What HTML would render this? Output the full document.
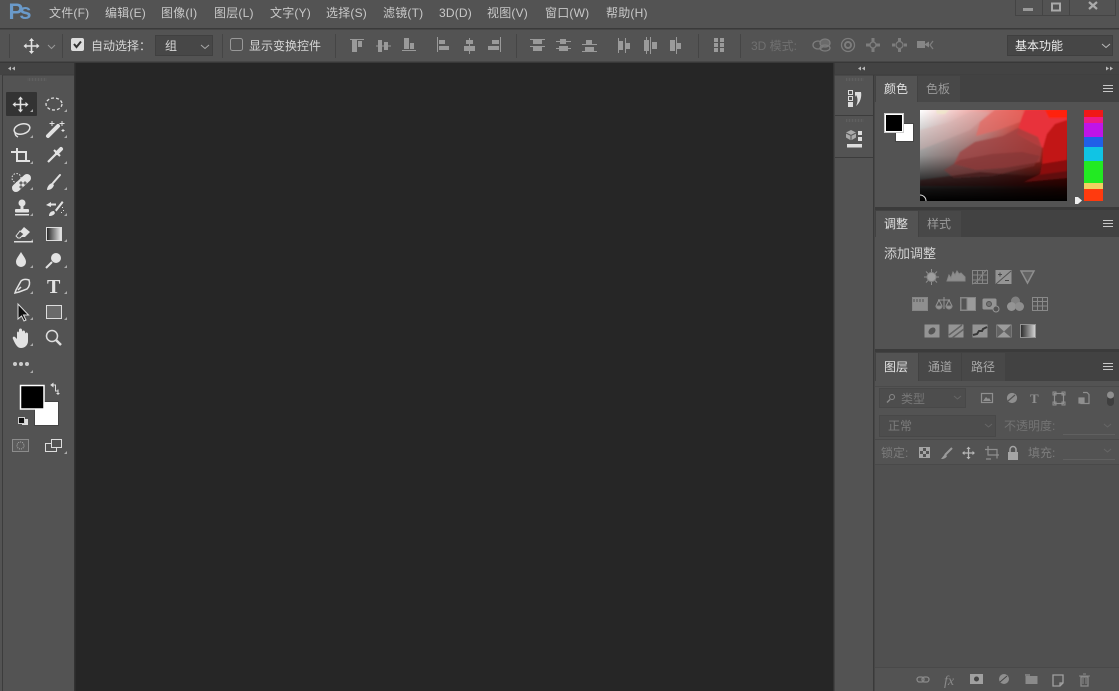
<!DOCTYPE html>
<html><head><meta charset="utf-8"><style>
html,body{margin:0;padding:0;background:#535353;overflow:hidden}
svg{display:block;font-family:"Liberation Sans","Noto Sans CJK SC",sans-serif;font-size:12px}
</style></head><body>
<svg width="1119" height="691" viewBox="0 0 1119 691" xmlns="http://www.w3.org/2000/svg">
<defs>
<linearGradient id="h" x1="0" x2="1" y1="0" y2="0"><stop offset="0" stop-color="#fff"/><stop offset=".45" stop-color="#eb9a96"/><stop offset=".72" stop-color="#ee4a40"/><stop offset="1" stop-color="#ff1a0a"/></linearGradient>
<linearGradient id="v" x1="0" x2="0" y1="0" y2="1"><stop offset="0" stop-color="#000" stop-opacity="0"/><stop offset=".5" stop-color="#000" stop-opacity=".42"/><stop offset=".75" stop-color="#000" stop-opacity=".78"/><stop offset=".87" stop-color="#000" stop-opacity=".93"/><stop offset="1" stop-color="#000"/></linearGradient>
<linearGradient id="gr" x1="0" x2="1" y1="0" y2="0"><stop offset="0" stop-color="#222"/><stop offset="1" stop-color="#eee"/></linearGradient>
<filter id="sb" x="-10%" y="-10%" width="120%" height="120%"><feGaussianBlur stdDeviation=".7"/></filter>
<clipPath id="pc"><rect x="920" y="110" width="147" height="91"/></clipPath>
<g id="mv" fill="#e2e2e2"><path d="M-.8-5h1.600V-.8H5V.8H.8V5H-.8V.8H-5V-.8H-.8z"/><path d="M0-8l2.600 3h-5.200zM0 8l2.600-3h-5.200zM-8 0l3-2.600v5.200zM8 0l-3-2.600v5.200z"/></g>
</defs>

<rect width="1119" height="691" fill="#535353"/>
<rect y="28" width="1119" height="1.500" fill="#3a3a3a"/>
<rect y="61.500" width="1119" height="1.500" fill="#383838"/>
<rect x="0" y="63" width="1119" height="12" fill="#434343"/>
<rect x="75" y="63" width="759" height="628" fill="#262626"/>
<rect x="74" y="63" width="1.500" height="628" fill="#333"/>
<rect x="833" y="63" width="1.500" height="628" fill="#333"/>
<rect x="2" y="75" width="1" height="616" fill="#3c3c3c"/>
<rect x="3" y="74.500" width="71" height="1" fill="#3c3c3c"/>
<rect x="834" y="74.500" width="285" height="1" fill="#3c3c3c"/>
<rect x="873" y="75" width="1.500" height="616" fill="#3a3a3a"/>
<rect x="835" y="115" width="38" height="1" fill="#3c3c3c"/>
<rect x="835" y="157" width="38" height="1" fill="#3c3c3c"/>

<!-- title bar -->
<text x="8.500" y="19" font-size="22" font-weight="bold" fill="#6a9aca" textLength="23">Ps</text>
<g fill="#c8c8c8" letter-spacing=".2">
<text x="49" y="17">文件(F)</text><text x="105" y="17">编辑(E)</text><text x="161" y="17">图像(I)</text><text x="214" y="17">图层(L)</text><text x="270" y="17">文字(Y)</text><text x="326" y="17">选择(S)</text><text x="383" y="17">滤镜(T)</text><text x="439" y="17">3D(D)</text><text x="487" y="17">视图(V)</text><text x="545" y="17">窗口(W)</text><text x="606" y="17">帮助(H)</text>
</g>
<path d="M1015.500 0v15.500h100V0M1042.500 0v15.500M1069.500 0v15.500" fill="none" stroke="#444"/>
<rect x="1023" y="8" width="10" height="3" fill="#999"/>
<rect x="1052" y="3.500" width="8" height="7" fill="none" stroke="#aaa" stroke-width="2"/>
<path d="M1089 2l8 7M1097 2l-8 7" stroke="#aaa" stroke-width="2.200"/>

<!-- options bar -->
<path d="M9.500 34v24M62.500 34v24M222.500 34v24M335.500 34v24M516.500 34v24M698.500 34v24M740.500 34v24" stroke="#454545"/>
<use href="#mv" transform="translate(31.500,46)"/>
<path d="M48 45l3.500 3.500L55 45" fill="none" stroke="#999"/>
<rect x="71" y="38" width="13" height="13" rx="2" fill="#ddd"/>
<path d="M74 44l2.500 3 4.500-5.500" fill="none" stroke="#333" stroke-width="2"/>
<text x="91" y="50" fill="#d6d6d6">自动选择：</text>
<rect x="155.500" y="35.500" width="57" height="20" fill="#474747" stroke="#404040"/>
<text x="165" y="50" fill="#d6d6d6">组</text>
<path d="M201 45l4 3.500 4-3.500" fill="none" stroke="#aaa"/>
<rect x="230.500" y="38.500" width="12" height="12" rx="2" fill="none" stroke="#999"/>
<text x="249" y="50" fill="#d6d6d6">显示变换控件</text>

<g fill="#9a9a9a">
<!-- align -->
<rect x="350" y="39" width="14" height="1"/><rect x="352" y="40" width="5" height="12"/><rect x="358" y="41" width="4" height="6"/>
<rect x="376" y="45.500" width="15" height="1"/><rect x="378" y="40" width="4" height="12"/><rect x="384" y="42" width="4" height="8"/>
<rect x="402" y="50" width="14" height="1"/><rect x="404" y="38" width="5" height="11"/><rect x="410" y="43" width="4" height="6"/>
<rect x="437" y="37" width="1" height="15"/><rect x="439" y="40" width="6" height="4"/><rect x="439" y="46" width="10" height="4"/>
<rect x="469" y="38" width="1" height="16"/><rect x="466" y="40" width="7" height="4"/><rect x="464" y="46" width="11" height="5"/>
<rect x="500" y="37" width="1" height="15"/><rect x="492" y="40" width="7" height="4"/><rect x="488" y="46" width="11" height="4"/>
<!-- distribute v -->
<rect x="530" y="39" width="15" height="1"/><rect x="533" y="40" width="9" height="4"/><rect x="530" y="46" width="15" height="1"/><rect x="533" y="47" width="9" height="4"/>
<rect x="556" y="41" width="15" height="1"/><rect x="560" y="39" width="6" height="5"/><rect x="556" y="48" width="15" height="1"/><rect x="559" y="46" width="9" height="5"/>
<rect x="582" y="44" width="15" height="1"/><rect x="586" y="40" width="6" height="4"/><rect x="582" y="51" width="15" height="1"/><rect x="585" y="47" width="9" height="4"/>
<!-- distribute h -->
<rect x="618" y="38" width="1" height="15"/><rect x="619" y="41" width="4" height="9"/><rect x="625" y="38" width="1" height="15"/><rect x="626" y="43" width="4" height="6"/>
<rect x="644" y="40" width="5" height="11"/><rect x="650" y="37" width="1" height="17"/><rect x="652" y="42" width="5" height="7"/><rect x="646" y="37" width="1" height="17"/>
<rect x="670" y="40" width="5" height="11"/><rect x="676" y="37" width="1" height="17"/><rect x="677" y="43" width="4" height="6"/>
<rect x="714" y="38" width="4" height="14"/><rect x="720" y="38" width="4" height="14"/>
</g>
<path d="M714 42.500h10M714 47.500h10" stroke="#535353"/>

<text x="751" y="50" fill="#707070">3D 模式:</text>
<g fill="none" stroke="#7d7d7d" stroke-width="1.300">
<ellipse cx="818" cy="45" rx="5" ry="4"/><ellipse cx="825" cy="43" rx="5" ry="4" fill="#6a6a6a"/><ellipse cx="825" cy="48" rx="5" ry="3"/>
<circle cx="848" cy="45" r="6.500"/><circle cx="848" cy="45" r="3" stroke-width="2"/>
<path d="M873 38v14M866 45h14" stroke-width="3"/><circle cx="873" cy="45" r="3" fill="#535353"/>
<circle cx="899.500" cy="45" r="3.500"/><path d="M899.500 38v3M899.500 49v3M892 45h3M904 45h3" stroke-width="3"/>
<path d="M933 41l-3 4 3 4"/>
</g>
<rect x="917" y="41" width="8" height="7" fill="#868686"/><path d="M925 44l4-2.500v6l-4-2.500z" fill="#868686"/>

<rect x="1007.500" y="35.500" width="105" height="20" fill="#464646" stroke="#3f3f3f"/>
<text x="1015" y="50" fill="#eee">基本功能</text>
<path d="M1102 44l4 3.500 4-3.500" fill="none" stroke="#bbb"/>

<!-- collapse arrows -->
<g fill="#bbb"><path d="M11 66.500v4l-3-2zM15 66.500v4l-3-2z"/><path d="M861 66.500v4l-3-2zM865 66.500v4l-3-2z"/><path d="M1106 66.500v4l3-2zM1110 66.500v4l3-2z"/></g>

<!-- grips -->
<g fill="#5f5f5f"><rect x="27" y="78" width="20" height="3"/><rect x="846" y="78" width="18" height="3"/><rect x="846" y="119" width="18" height="3"/></g>
<path d="M28 78v3M31 78v3M34 78v3M37 78v3M40 78v3M43 78v3M46 78v3M848 78v3M851 78v3M854 78v3M857 78v3M860 78v3M863 78v3M848 119v3M851 119v3M854 119v3M857 119v3M860 119v3M863 119v3" stroke="#4e4e4e"/>

<!-- toolbar -->
<rect x="6" y="92" width="31" height="24" rx="1" fill="#333"/>
<use href="#mv" transform="translate(20.500,104.500)"/>
<ellipse cx="54" cy="104" rx="8" ry="6" fill="none" stroke="#ddd" stroke-width="1.300" stroke-dasharray="3 2"/>
<path d="M33 112h-3l3-3zM67 112h-3l3-3zM33 138h-3l3-3zM67 138h-3l3-3zM33 164h-3l3-3zM67 164h-3l3-3zM33 190h-3l3-3zM67 190h-3l3-3zM33 216h-3l3-3zM67 216h-3l3-3zM33 242h-3l3-3zM67 242h-3l3-3zM33 268h-3l3-3zM67 268h-3l3-3zM33 294h-3l3-3zM67 294h-3l3-3zM33 320h-3l3-3zM67 320h-3l3-3zM33 346h-3l3-3zM33 373h-3l3-3zM67 454h-3l3-3z" fill="#aaa"/>

<g fill="none" stroke="#e2e2e2" stroke-width="1.500">
<ellipse cx="22" cy="129" rx="8" ry="5" transform="rotate(-15 22 129)"/><path d="M15 132c0 3 1 4 3 5"/>
<path d="M48 136L58 126" stroke-width="4" stroke-linecap="round"/>
<path d="M52 121v5M49.500 123.500h5M62 121v5M59.500 123.500h5M63 129v3M61.500 130.500h3" stroke-width="1"/>
<path d="M11 152h15v9M17 148v13h13" stroke-width="2"/>
<path d="M48 162l9-9" stroke-width="2.200"/><path d="M57 153l4-4" stroke-width="4" stroke-linecap="round"/><path d="M54 150l6 6" stroke-width="2"/>
<circle cx="16.500" cy="178" r="4.500" stroke-width="1" stroke-dasharray="1.500 1.500"/>
<path d="M16 188l11-10" stroke-width="8" stroke-linecap="round"/>
<path d="M53 183l7-8" stroke-width="2" stroke-linecap="round"/>
</g>
<path d="M19 183l2-2 2 2-2 2zM23 183l2-2 2 2-2 2zM19 187l2-2 2 2-2 2z" fill="#666"/>
<path d="M47 190c0-3 2-6 5-7l2 2c-1 3-3 5-7 5z" fill="#e2e2e2"/>
<g fill="#e2e2e2">
<circle cx="22" cy="203" r="3.500"/><rect x="20.500" y="205" width="3" height="5"/><rect x="15" y="209" width="14" height="3.500" rx="1"/><rect x="15" y="214" width="14" height="1.500"/>
<path d="M62 201l-7 9 1.500 1.500 7-9zM54 211c-3 0-5 2-5 5 3 0 5-1 6-3z"/><path d="M46 205l5-3v1.500h5v2h-5v1.500z"/>
<rect x="62" y="207" width="1" height="1"/><rect x="63" y="210" width="1" height="1"/><rect x="61" y="212" width="1" height="1"/>
<path d="M24 227l6 5-5 5h-4l-3-3z"/>
</g>
<path d="M16 236l4-5 4 3-4 4h-2z" fill="#535353" stroke="#e2e2e2"/><rect x="14" y="241" width="19" height="1.500" fill="#ddd"/>
<rect x="46.500" y="227.500" width="15" height="13" fill="url(#gr)" stroke="#ddd"/>
<path d="M21 252c3 5 5 7 5 10a5 5 0 0 1-10 0c0-3 2-5 5-10z" fill="#e2e2e2"/>
<circle cx="56" cy="258" r="5" fill="#e2e2e2"/><path d="M52 262l-6 6" stroke="#e2e2e2" stroke-width="2"/>
<path d="M29 280c-3-1-6-1-8 1l-5 9-1 3 4-1 8-3c3-3 3-6 2-9zM21 287l-3 3" fill="none" stroke="#e2e2e2" stroke-width="1.500"/>
<text x="47" y="293" font-family="Liberation Serif,serif" font-weight="bold" font-size="20" fill="#e2e2e2">T</text>
<path d="M18 304v15l3.500-3 2.500 5 2-1-2.500-5h5z" fill="#111" stroke="#ddd"/>
<rect x="46.500" y="305.500" width="15" height="13" fill="#6a6a6a" stroke="#ddd"/>
<path d="M13 339c-1-2 1-3 2-2l2 2v-6c0-2 2-2 2 0v-3c0-2 3-2 3 0v2c0-2 3-2 3 0v2c0-2 3-2 3 0v7c0 4-3 7-7 7-3 0-5-2-8-9z" fill="#e2e2e2"/>
<circle cx="52" cy="336" r="5.500" fill="none" stroke="#ddd" stroke-width="1.500"/><path d="M56 340l5 5" stroke="#ddd" stroke-width="2.500"/>
<g fill="#ccc"><circle cx="15" cy="364" r="2"/><circle cx="21" cy="364" r="2"/><circle cx="27" cy="364" r="2"/></g>

<rect x="34.500" y="401.500" width="24" height="24" fill="#fff" stroke="#444"/>
<rect x="20.500" y="385.500" width="23.500" height="23.500" fill="#000" stroke="#fff" stroke-width="1.500"/>
<path d="M52 385h3.500v2.500M51 385l2-1.500v3zM55.500 387.500v3.500h3M58 389.500v3.500" fill="none" stroke="#ddd"/>
<path d="M56 393l2 2 2-2z" fill="#ddd"/>
<rect x="22" y="419" width="6" height="6" fill="#ddd"/><rect x="18.500" y="417.500" width="6" height="6" fill="#111" stroke="#ccc"/>
<rect x="12.500" y="439.500" width="16" height="12" fill="#5b5b5b" stroke="#8c8c8c"/><circle cx="20.500" cy="445.500" r="3.500" fill="none" stroke="#aaa" stroke-dasharray="1 1"/>
<rect x="45.500" y="443.500" width="11" height="8" fill="none" stroke="#ddd"/><rect x="51.500" y="439.500" width="10" height="8" fill="#535353" stroke="#ddd"/>

<!-- dock icons -->
<g fill="none" stroke="#ddd"><rect x="848.500" y="90.500" width="4" height="4"/><rect x="848.500" y="96.500" width="4" height="4"/></g>
<rect x="848" y="102" width="5" height="5" fill="#ddd"/>
<path d="M855 92h6c1 5-1 11-5 14 2-4 2-8 0-11l-1 2z" fill="#ddd"/>
<path d="M851 130l5 2.500v5l-5 3-5-3v-5z" fill="#aaa"/><path d="M846 133l5 2.500 5-2.500M851 135.500v5" stroke="#535353" fill="none"/>
<rect x="858" y="131" width="4" height="4" fill="#ddd"/><rect x="858" y="137" width="4" height="4" fill="#ddd"/><rect x="847" y="144" width="15" height="3.500" fill="#ddd"/>

<!-- panel tabs -->
<rect x="875" y="75" width="244" height="27" fill="#424242"/>
<rect x="875" y="210" width="244" height="27" fill="#424242"/>
<rect x="875" y="352" width="244" height="29" fill="#424242"/>
<rect x="875" y="207" width="244" height="3" fill="#3b3b3b"/>
<rect x="875" y="349" width="244" height="3" fill="#3b3b3b"/>
<rect x="876" y="76" width="41" height="26" fill="#535353"/><rect x="918" y="76" width="42" height="26" fill="#484848"/>
<rect x="876" y="211" width="42" height="26" fill="#535353"/><rect x="919" y="211" width="42" height="26" fill="#484848"/>
<rect x="876" y="353" width="42" height="28" fill="#535353"/><rect x="919" y="353" width="42" height="28" fill="#484848"/><rect x="962" y="353" width="43" height="28" fill="#484848"/>
<text x="884" y="93" fill="#e2e2e2">颜色</text><text x="926" y="93" fill="#999">色板</text>
<text x="884" y="228" fill="#e2e2e2">调整</text><text x="927" y="228" fill="#999">样式</text>
<text x="884" y="371" fill="#e2e2e2">图层</text><text x="928" y="371" fill="#a6a6a6">通道</text><text x="971" y="371" fill="#a6a6a6">路径</text>
<path d="M1103 85.500h10M1103 88.500h10M1103 91.500h10M1103 220.500h10M1103 223.500h10M1103 226.500h10M1103 363.500h10M1103 366.500h10M1103 369.500h10" stroke="#c8c8c8"/>

<!-- color panel -->
<rect x="895.500" y="123.500" width="18" height="18" fill="#fff" stroke="#444"/>
<rect x="884.500" y="113.500" width="19" height="19" fill="#000" stroke="#ccc" stroke-width="1"/>
<rect x="885.500" y="114.500" width="17" height="17" fill="none" stroke="#fff"/>
<rect x="920" y="110" width="147" height="91" fill="url(#h)"/>
<rect x="920" y="110" width="147" height="91" fill="url(#v)"/>
<g clip-path="url(#pc)"><g filter="url(#sb)">
<path d="M1023 110h44v10l-12 4-8 10-4 14-12-6-14-8 4-14z" fill="#e8333a"/>
<path d="M1045 110h22v8h-18z" fill="#ff2408"/>
<path d="M1067 120l-12 4-8 10-4 14-1 16 25-4z" fill="#c21414"/>
<path d="M1067 160l-25 4-2 10-16 8 43-4z" fill="#8a0e0e"/>
<path d="M960 152l15-10 28-6 15-8 20 9 4 11-2 14-36 6-28 2-22-6z" fill="#a04040" opacity=".75"/>
<path d="M960 160l32-6 30-2 18 4-6 10-42 10-38 2-10-8z" fill="#7f3434" opacity=".55"/>
<path d="M995 110h30l-5 12-22 8-22 6 4-14z" fill="#e46a62" opacity=".7"/>
<path d="M920 130l30-8 20-10 20 0-20 18-30 12-20 8z" fill="#d8b0ac" opacity=".35"/>
<path d="M920 180l60-8 50 4 37-5v15h-147z" fill="#200808" opacity=".4"/>
<path d="M936 110h13l-4 4h-8z" fill="#eee8c8" opacity=".8"/>
</g></g>
<path d="M920 195a6 6 0 0 1 6 6" fill="none" stroke="#ddd"/>
<rect x="1084" y="110" width="19" height="7" fill="#f01818"/><rect x="1084" y="117" width="19" height="6" fill="#ee1a86"/><rect x="1084" y="123" width="19" height="16" fill="#c014e8"/><rect x="1084" y="137" width="19" height="10" fill="#2060e8"/><rect x="1084" y="147" width="19" height="14" fill="#10c4e4"/><rect x="1084" y="161" width="19" height="22" fill="#22ea22"/><rect x="1084" y="183" width="19" height="6" fill="#f0d060"/><rect x="1084" y="189" width="19" height="12" fill="#ff3a0e"/>
<path d="M1075 197h3l4 3.500-4 3.500h-3z" fill="#eee"/>

<!-- adjust panel -->
<text x="884" y="258" font-size="13" fill="#d2d2d2">添加调整</text>
<g fill="none" stroke="#8f8f8f" stroke-width="1" opacity=".85">
<circle cx="931.500" cy="277" r="4.500" fill="#aaa"/><path d="M931.500 269v3M931.500 282v3M924 277h3M936 277h3M926 271.500l2 2M935 280.500l2 2M926 282.500l2-2M935 273.500l2-2" stroke="#999"/>
<path d="M947 281l2-6 2 3 2-6 2 3 2-4 2 3 2-1 2 2 2 2v4z" fill="#999"/>
<rect x="972.500" y="270.500" width="15" height="13"/><path d="M972 284c8-2 10-12 15-14M977.500 270v14M982.500 270v14M972 275h15M972 280h15"/>
<rect x="996" y="270.500" width="15" height="13" fill="#a0a0a0" stroke="#a0a0a0"/><path d="M996 284l15-13" stroke="#535353"/><path d="M998 274.500h4M1000 272.500v4M1005 280.500h4" stroke="#444"/>
<path d="M1021 271h13l-6.500 12z" stroke="#999" stroke-width="1.500" fill="#666"/>
<rect x="912.500" y="297.500" width="15" height="13" fill="#9a9a9a"/><path d="M914 299v3M917 299v3M920 299v3M923 299v3" stroke="#535353"/>
<path d="M944 297v12M938 300h12M936 306l3-6 3 6zM946 306l3-6 3 6z" stroke="#a0a0a0"/><path d="M936 306h6a3 3 0 0 1-6 0zM946 306h6a3 3 0 0 1-6 0z" fill="#a0a0a0"/>
<rect x="960.500" y="297.500" width="15" height="13" fill="#a8a8a8"/><rect x="961" y="298" width="6" height="12" fill="#555"/>
<rect x="983" y="299" width="13" height="10" rx="1" fill="#a0a0a0" stroke="#a0a0a0"/><circle cx="989" cy="304" r="2.500" stroke="#535353" fill="#777"/><circle cx="996" cy="309" r="3" fill="#535353" stroke="#a0a0a0"/>
<circle cx="1015.500" cy="301" r="4.500" fill="#8a8a8a" stroke="none"/><circle cx="1011.500" cy="306.500" r="4.500" fill="#a0a0a0" stroke="none"/><circle cx="1019.500" cy="306.500" r="4.500" fill="#999" stroke="none"/>
<path d="M1032.500 297.500h15v13h-15zM1032.500 301.500h15M1032.500 306h15M1037.500 297.500v13M1042.500 297.500v13" stroke="#939393"/>
<rect x="924.500" y="324.500" width="15" height="13" fill="#a0a0a0" stroke="none"/><ellipse cx="932" cy="331" rx="4" ry="3" transform="rotate(-45 932 331)" fill="#555" stroke="none"/>
<rect x="948.500" y="324.500" width="15" height="13" fill="#a0a0a0" stroke="none"/><path d="M949 335l13-10M952 338l12-9" stroke="#666" stroke-width="1.500"/>
<rect x="972.500" y="324.500" width="15" height="13" fill="#a0a0a0" stroke="none"/><path d="M973 335l4-1 2-3h3l1-2 4-2" stroke="#333" stroke-width="2"/>
<rect x="996.500" y="324.500" width="15" height="13" fill="#a8a8a8" stroke="none"/><path d="M997 325l7 6.500-7 6zM1011 325l-7 6.500 7 6z" fill="#666" stroke="none"/>
<rect x="1020.500" y="324.500" width="15" height="13" fill="url(#gr)" stroke="#a0a0a0"/>
</g>

<!-- layers panel -->
<rect x="875" y="464" width="244" height="204" fill="#505050"/>
<path d="M875 386.500h244" stroke="#4a4a4a"/>
<rect x="879.500" y="388.500" width="86" height="19" fill="#4d4d4d" stroke="#484848"/>
<circle cx="892" cy="397" r="2.500" fill="none" stroke="#888"/><path d="M890 399.500l-3 3" stroke="#888" stroke-width="1.500"/>
<text x="901" y="403" fill="#777">类型</text>
<path d="M954 396l3.500 3 3.500-3" fill="none" stroke="#666"/>
<g fill="none" stroke="#8f8f8f" stroke-width="1.200">
<rect x="981.500" y="393.500" width="11" height="9"/><path d="M983 401l3-4 2 2 1-1 2 3z" fill="#8f8f8f" stroke="none"/>
<circle cx="1012" cy="398" r="4.500" fill="#8f8f8f"/><path d="M1008 401l7-6" stroke="#535353"/>
<rect x="1054.500" y="393.500" width="9" height="10"/><path d="M1053 392h3v3h-3zM1062 392h3v3h-3zM1053 402h3v3h-3zM1062 402h3v3h-3z" stroke-width="1"/>
<path d="M1083 392.500h4l2 2v9h-8v-4"/><rect x="1079" y="398" width="5" height="5" fill="#8f8f8f"/>
</g>
<text x="1030" y="403" font-family="Liberation Serif,serif" font-weight="bold" font-size="13" fill="#8f8f8f">T</text>
<rect x="1107" y="396" width="7" height="10" rx="3.500" fill="#3f3f3f"/><circle cx="1110.500" cy="395" r="3.500" fill="#8f8f8f"/>
<rect x="879.500" y="415.500" width="116" height="21" fill="#4d4d4d" stroke="#484848"/>
<text x="888" y="430" fill="#7c7c7c">正常</text>
<path d="M985 424l3.500 3 3.500-3M1104 424l3.500 3 3.500-3M1104 449l3.500 3 3.500-3" fill="none" stroke="#666"/>
<text x="1004" y="430" fill="#737373">不透明度:</text>
<path d="M1063 434.500h52M1063 459.500h52" stroke="#606060"/>
<path d="M875 439.500h244M875 464.500h244" stroke="#494949"/>
<text x="881" y="457" fill="#7c7c7c">锁定:</text>
<text x="1028" y="457" fill="#7c7c7c">填充:</text>
<rect x="919.500" y="447.500" width="10" height="10" fill="none" stroke="#a5a5a5"/>
<path d="M920 448h3v3h-3zM926 448h3v3h-3zM923 451h3v3h-3zM920 454h3v3h-3zM926 454h3v3h-3z" fill="#a5a5a5"/>
<path d="M952 448l-7 7" stroke="#9a9a9a" stroke-width="2"/><path d="M945 454l-4 5c3 0 5-1 6-3z" fill="#9a9a9a"/>
<g transform="translate(968.500,453) scale(.8)"><use href="#mv" opacity=".7"/></g>
<path d="M985 449.500h12v9M988 446v9h11M986 459h5" fill="none" stroke="#8f8f8f" stroke-width="1.200"/>
<rect x="1008" y="452" width="10" height="8" fill="#a5a5a5"/><path d="M1010 452v-2.500a3 3 0 0 1 6 0v2.500" fill="none" stroke="#a5a5a5" stroke-width="1.500"/>

<!-- footer -->
<path d="M875 667.500h244" stroke="#494949"/>
<g fill="none" stroke="#8a8a8a" stroke-width="1.300">
<rect x="917" y="677" width="7" height="5" rx="2.500"/><rect x="922" y="677" width="7" height="5" rx="2.500"/>
<rect x="1025.500" y="676" width="12" height="8" fill="#8a8a8a" stroke="none"/><path d="M1025 675h5" stroke-width="1.500"/>
<path d="M1053 675h10v8l-3 3h-7zM1060 686v-3h3" stroke="#a0a0a0"/>
<rect x="1081" y="677" width="7" height="9"/><path d="M1079 676h11M1083 674h3M1083 678v6M1086 678v6" stroke-width="1"/>
</g>
<text x="944" y="685" font-family="Liberation Serif,serif" font-style="italic" font-size="14" fill="#8a8a8a">fx</text>
<rect x="970" y="674" width="13" height="10" fill="#a0a0a0"/><circle cx="976.500" cy="679" r="2.500" fill="#444"/>
<circle cx="1004" cy="679" r="5" fill="#8f8f8f"/><path d="M1000 682l7-6" stroke="#444"/>
</svg>
</body></html>
